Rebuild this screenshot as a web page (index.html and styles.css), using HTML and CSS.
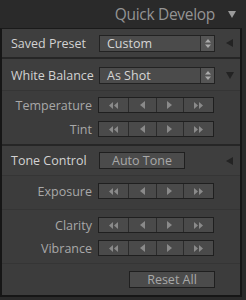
FILE: index.html
```html
<!DOCTYPE html>
<html lang="en">
<head>
    <meta charset="UTF-8">
    <title>Quick Develop</title>
    <link rel="stylesheet" href="styles.css">
</head>
<body>
    <div class="header">
        <span class="title">Quick Develop</span>
        <svg class="tri" width="8" height="7" viewBox="0 0 8 7"><path d="M0 0H8L4 7Z" fill="#9a9a9a"/></svg>
    </div>
    <div class="panel">
        <div class="section">
            <div class="row main first">
                <span class="label">Saved Preset</span>
                <div class="select"><span class="value">Custom</span><span class="spin"><svg width="6" height="9" viewBox="0 0 6 9"><path d="M3 0L6 3.5H0Z M3 9L6 5.5H0Z" fill="#aaa"/></svg></span></div>
                <svg class="side" width="7" height="8" viewBox="0 0 7 8"><path d="M7 0V8L0 4Z" fill="#232323"/></svg>
            </div>
        </div>
        <div class="section">
            <div class="row main wb">
                <span class="label">White Balance</span>
                <div class="select"><span class="value">As Shot</span><span class="spin"><svg width="6" height="9" viewBox="0 0 6 9"><path d="M3 0L6 3.5H0Z M3 9L6 5.5H0Z" fill="#aaa"/></svg></span></div>
                <svg class="side" width="8" height="7" viewBox="0 0 8 7"><path d="M0 0H8L4 7Z" fill="#232323"/></svg>
            </div>
            <div class="sub">
                <div class="row step"><span class="sublabel">Temperature</span><div class="steps"></div></div>
                <div class="row step"><span class="sublabel">Tint</span><div class="steps"></div></div>
            </div>
        </div>
        <div class="section">
            <div class="row main tone">
                <span class="label">Tone Control</span>
                <button class="btn auto">Auto Tone</button>
                <svg class="side" width="7" height="8" viewBox="0 0 7 8"><path d="M7 0V8L0 4Z" fill="#232323"/></svg>
            </div>
            <div class="sub single">
                <div class="row step"><span class="sublabel">Exposure</span><div class="steps"></div></div>
            </div>
            <div class="sub">
                <div class="row step"><span class="sublabel">Clarity</span><div class="steps"></div></div>
                <div class="row step"><span class="sublabel">Vibrance</span><div class="steps"></div></div>
            </div>
            <div class="sub reset-row">
                <button class="btn reset">Reset All</button>
            </div>
        </div>
    </div>

    <template id="steps-tpl">
        <span class="seg wide"><svg width="9" height="7" viewBox="0 0 9 7"><path d="M4 0V7L0 3.5Z M9 0V7L5 3.5Z" fill="#8a8a8a"/></svg></span>
        <span class="seg"><svg width="5" height="8" viewBox="0 0 5 8"><path d="M5 0V8L0 4Z" fill="#8a8a8a"/></svg></span>
        <span class="seg"><svg width="5" height="8" viewBox="0 0 5 8"><path d="M0 0V8L5 4Z" fill="#8a8a8a"/></svg></span>
        <span class="seg wide"><svg width="9" height="7" viewBox="0 0 9 7"><path d="M0 0V7L4 3.5Z M5 0V7L9 3.5Z" fill="#8a8a8a"/></svg></span>
    </template>

    <script>
        const tpl = document.getElementById('steps-tpl');
        document.querySelectorAll('.steps').forEach(function(el) {
            el.appendChild(tpl.content.cloneNode(true));
        });
    </script>
</body>
</html>
```

FILE: styles.css
```css
body {
    margin: 0;
    background-color: #2a2a2a;
    font-family: 'Open Sans', 'Liberation Sans', sans-serif;
    color: #cfcfcf;
    width: 246px;
    height: 300px;
    overflow: hidden;
}
.header {
    height: 28px;
    display: flex;
    align-items: center;
    justify-content: flex-end;
    padding-right: 10px;
    box-sizing: border-box;
}
.title {
    font-size: 15.5px;
    color: #949494;
    letter-spacing: -0.3px;
    margin-right: 13px;
}
.tri {
    margin-top: 1px;
}
.panel {
    width: 242px;
    height: 269px;
    box-sizing: border-box;
    background-color: #3c3c3c;
    border: 2px solid #161616;
    border-top: 1px solid #1a1a1a;
    display: flex;
    flex-direction: column;
}
.section {
    border-bottom: 2px solid #262626;
}
.section:last-child {
    border-bottom: none;
    flex: 1;
}
.row {
    display: flex;
    align-items: center;
}
.main {
    box-sizing: border-box;
    border-bottom: 1px solid #353535;
    background-color: #3e3e3e;
}
.main.first {
    height: 28px;
    border-bottom: none;
}
.main.wb {
    height: 32px;
    padding-top: 1px;
}
.main.tone {
    height: 30px;
}
.label {
    width: 88px;
    padding-left: 9px;
    font-size: 12.5px;
    color: #d2d2d2;
    white-space: nowrap;
}
.select {
    width: 116px;
    height: 17px;
    box-sizing: border-box;
    background-color: #4b4b4b;
    border: 1px solid #222;
    display: flex;
    align-items: stretch;
}
.value {
    flex: 1;
    font-size: 12.5px;
    line-height: 15px;
    padding-left: 7px;
    color: #d6d6d6;
}
.spin {
    width: 13px;
    border-left: 1px solid #2a2a2a;
    background-color: #555;
    display: flex;
    align-items: center;
    justify-content: center;
}
.side {
    margin-left: 11px;
}
.sub {
    padding: 6px 0 7px;
    border-bottom: 1px solid #353535;
}
.sub.single {
    padding: 7px 0 10px;
}
.section:last-child .sub {
    padding-top: 7px;
}
.sub:last-child {
    border-bottom: none;
}
.step {
    height: 16px;
    margin-bottom: 8px;
}
.section:last-child .step {
    margin-bottom: 7px;
}
.sub .step:last-child {
    margin-bottom: 0;
}
.sublabel {
    width: 90px;
    text-align: right;
    padding-right: 6px;
    font-size: 12.5px;
    color: #a8a8a8;
    white-space: nowrap;
}
.steps {
    width: 116px;
    height: 16px;
    box-sizing: border-box;
    border: 1px solid #1f1f1f;
    display: flex;
    background-color: #4a4a4a;
}
.seg {
    width: 28px;
    display: flex;
    align-items: center;
    justify-content: center;
    border-left: 1px solid #2b2b2b;
}
.seg:first-child {
    border-left: none;
}
.seg.wide {
    width: 30px;
}
.btn {
    height: 17px;
    box-sizing: border-box;
    background-color: #4b4b4b;
    border: 1px solid #1f1f1f;
    color: #a8a8a8;
    font-family: inherit;
    font-size: 12.5px;
    padding: 0;
    line-height: 14px;
}
.auto {
    width: 86px;
}
.auto + .side {
    margin-left: 41px;
}
.reset-row {
    display: flex;
    justify-content: flex-start;
    padding: 7px 0 0 127px;
}
.reset {
    width: 86px;
}
```
